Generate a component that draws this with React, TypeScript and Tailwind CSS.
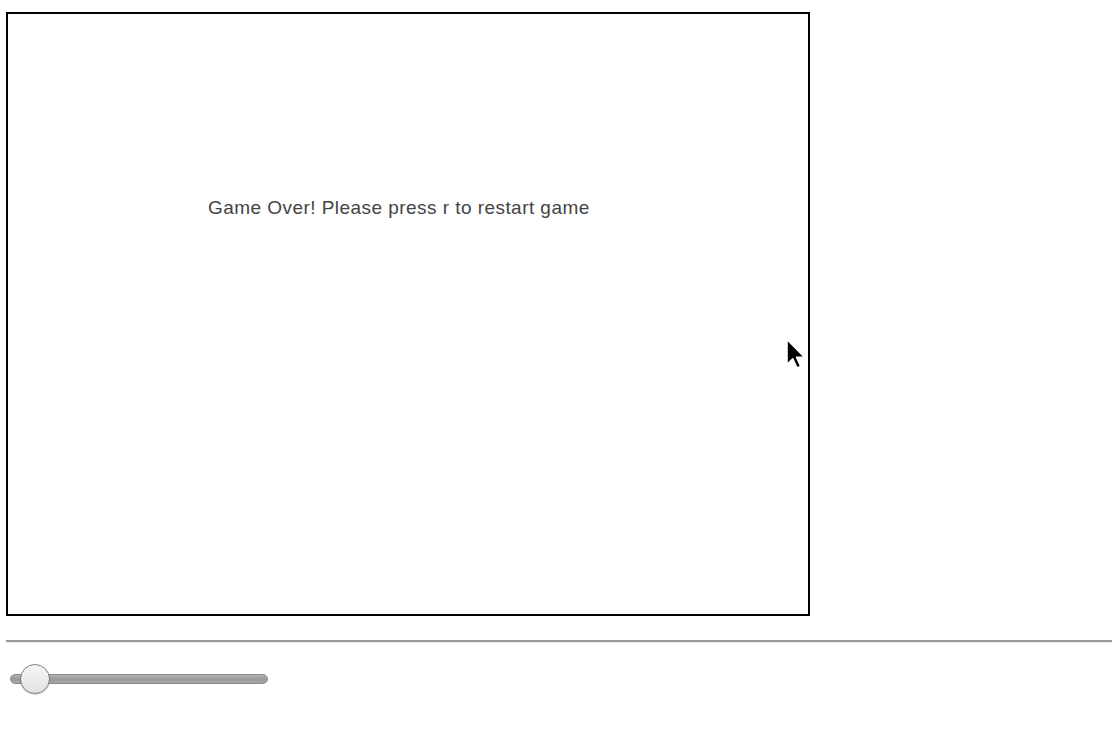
import React from "react";

export default function App() {
  return (
    <div className="relative w-[1112px] h-[734px] bg-white overflow-hidden" style={{ fontFamily: '"Liberation Sans", Arial, sans-serif' }}>
      <div className="pl-[6px] pt-[12px]">
        <div className="w-[804px] h-[604px] border-2 border-black flex flex-col">
          <div className="h-[182px]" />
          <div className="pl-[200px] text-[19px] leading-[24px] tracking-[0.45px] text-[#444]">Game Over! Please press r to restart game</div>
        </div>
      </div>
      <div className="mt-[24px] ml-[6px] h-[3px] border-t-2 border-[#999] bg-[#eaeaea]" />
      <div className="mt-[21px] ml-[10px] relative w-[258px] h-[30px] flex items-center">
        <div className="w-full h-[10px] rounded-full border border-[#8a8a8a] bg-gradient-to-b from-[#b5b5b5] via-[#999999] to-[#a8a8a8]" />
        <div className="absolute left-[10px] top-[0px] w-[30px] h-[30px] rounded-full border-[1.5px] border-[#7d7d7d] bg-gradient-to-b from-[#f6f6f6] to-[#e2e2e2] shadow-[0_1px_1px_rgba(0,0,0,0.2)]" />
      </div>
      <svg className="absolute left-[785px] top-[338px]" width="24" height="36" viewBox="0 0 24 36">
        <path d="M2 1.5 L2 26.5 L7.8 20.8 L12 30 L15.8 28.3 L11.6 19.3 L19.5 19.3 Z" fill="black" stroke="white" strokeWidth="1.6" strokeLinejoin="round" />
      </svg>
    </div>
  );
}
